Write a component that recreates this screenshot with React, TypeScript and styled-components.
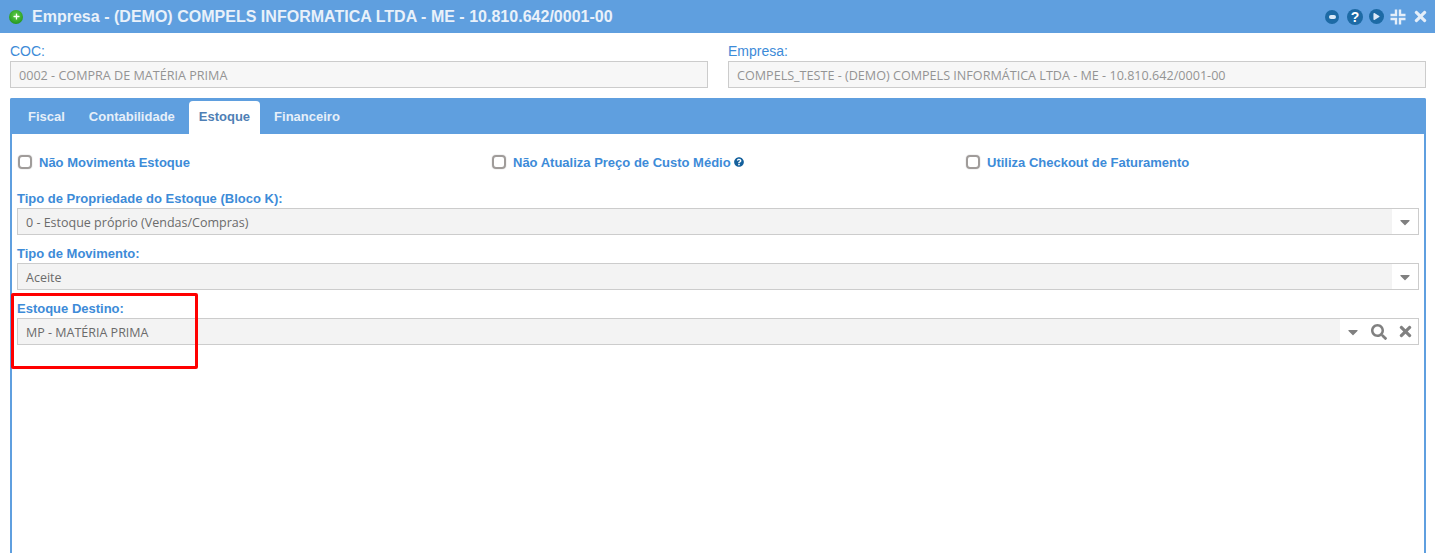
import React from 'react';
import styled, { createGlobalStyle } from 'styled-components';
import { FaQuestionCircle, FaSearch, FaTimes, FaCaretDown, FaPlay, FaPlus } from 'react-icons/fa';

const BLUE = '#5f9fdf';
const LABEL = '#3d8bd8';

const GlobalStyle = createGlobalStyle`
  html, body {
    margin: 0;
    height: 553px;
    overflow: hidden;
    background: #fff;
    font-family: "Liberation Sans", Arial, sans-serif;
  }
`;

function CheckField({ label, help }: { label: string; help?: boolean }) {
  return (
    <CheckItem>
      <CheckBox />
      <CheckLabel>{label}</CheckLabel>
      {help && <HelpIcon><FaQuestionCircle size={10} /></HelpIcon>}
    </CheckItem>
  );
}

function SelectField({ label, value, lookup }: { label: string; value: string; lookup?: boolean }) {
  return (
    <Field>
      <FieldLabel>{label}</FieldLabel>
      <SelectBox>
        <SelectValue>{value}</SelectValue>
        <SelectActions>
          <FaCaretDown size={16} />
          {lookup && <FaSearch size={16} />}
          {lookup && <FaTimes size={17} />}
        </SelectActions>
      </SelectBox>
    </Field>
  );
}

export default function App() {
  return (
    <Page>
      <GlobalStyle />
      <TitleBar>
        <TitleLeft>
          <GreenBall><FaPlus size={7} color="#fff" /></GreenBall>
          <Title>Empresa - (DEMO) COMPELS INFORMATICA LTDA - ME - 10.810.642/0001-00</Title>
        </TitleLeft>
        <TitleTools>
          <RoundTool $size={14}><ToolDash /></RoundTool>
          <RoundTool $size={16}><HelpGlyph>?</HelpGlyph></RoundTool>
          <RoundTool $size={15}><FaPlay size={7} color="#dbe9f7" /></RoundTool>
          <svg width="16" height="16" viewBox="0 0 16 16" fill="none" stroke="#e4eef9" strokeWidth="2.4">
            <path d="M6 0.5V6H0.5M10 0.5V6H15.5M6 15.5V10H0.5M10 15.5V10H15.5" />
          </svg>
          <FaTimes size={17} color="#e4eef9" />
        </TitleTools>
      </TitleBar>

      <TopFields>
        <TopField>
          <TopLabel>COC:</TopLabel>
          <ReadOnlyInput>0002 - COMPRA DE MATÉRIA PRIMA</ReadOnlyInput>
        </TopField>
        <TopField>
          <TopLabel>Empresa:</TopLabel>
          <ReadOnlyInput>COMPELS_TESTE - (DEMO) COMPELS INFORMÁTICA LTDA - ME - 10.810.642/0001-00</ReadOnlyInput>
        </TopField>
      </TopFields>

      <TabPanel>
        <TabBar>
          {['Fiscal', 'Contabilidade', 'Estoque', 'Financeiro'].map((tab) => (
            <Tab key={tab} $active={tab === 'Estoque'}>{tab}</Tab>
          ))}
        </TabBar>
        <TabBody>
          <CheckRow>
            <CheckField label="Não Movimenta Estoque" />
            <CheckField label="Não Atualiza Preço de Custo Médio" help />
            <CheckField label="Utiliza Checkout de Faturamento" />
          </CheckRow>
          <SelectField label="Tipo de Propriedade do Estoque (Bloco K):" value="0 - Estoque próprio (Vendas/Compras)" />
          <SelectField label="Tipo de Movimento:" value="Aceite" />
          <SelectField label="Estoque Destino:" value="MP - MATÉRIA PRIMA" lookup />
          <Highlight />
        </TabBody>
      </TabPanel>
    </Page>
  );
}

const Page = styled.div`
  height: 553px;
  display: flex;
  flex-direction: column;
  overflow: hidden;
`;

const TitleBar = styled.div`
  height: 33px;
  flex: none;
  background: ${BLUE};
  display: flex;
  align-items: center;
  justify-content: space-between;
  padding: 0 6px 0 9px;
`;

const TitleLeft = styled.div`
  display: flex;
  align-items: center;
  gap: 9px;
`;

const GreenBall = styled.span`
  width: 14px;
  height: 14px;
  border-radius: 50%;
  background: radial-gradient(circle at 50% 40%, #62d24c, #118411);
  display: flex;
  align-items: center;
  justify-content: center;
`;

const Title = styled.div`
  color: #e9f1fa;
  font-size: 16px;
  font-weight: bold;
  letter-spacing: 0.015px;
`;

const TitleTools = styled.div`
  display: flex;
  align-items: center;
  gap: 6px;
`;

const RoundTool = styled.span<{ $size: number }>`
  width: ${({ $size }) => $size}px;
  height: ${({ $size }) => $size}px;
  border-radius: 50%;
  background: #1d6aa5;
  display: flex;
  align-items: center;
  justify-content: center;

  &:first-child {
    margin-right: 2px;
  }
`;

const ToolDash = styled.span`
  width: 7px;
  height: 4px;
  border-radius: 2px;
  background: #dbe9f7;
`;

const HelpGlyph = styled.span`
  color: #fff;
  font-size: 14px;
  font-weight: bold;
  line-height: 16px;
`;

const TopFields = styled.div`
  display: grid;
  grid-template-columns: 698px 698px;
  column-gap: 20px;
  padding: 10px 0 0 10px;
`;

const TopField = styled.div`
  display: flex;
  flex-direction: column;
`;

const TopLabel = styled.label`
  color: ${LABEL};
  font-size: 14px;
  line-height: 16px;
  margin-bottom: 2px;
`;

const ReadOnlyInput = styled.div`
  height: 27px;
  box-sizing: border-box;
  border: 1px solid #ccc;
  background: #f7f7f7;
  color: #949494;
  font-family: "Open Sans", sans-serif;
  font-size: 12.6px;
  line-height: 25px;
  padding: 1px 0 0 8px;
`;

const TabPanel = styled.div`
  flex: 1;
  width: 1416px;
  margin: 10px 0 0 10px;
  box-sizing: border-box;
  border: 2px solid ${BLUE};
  border-bottom: none;
  border-radius: 2px 2px 0 0;
  display: flex;
  flex-direction: column;
`;

const TabBar = styled.div`
  height: 34px;
  flex: none;
  background: ${BLUE};
  display: flex;
  align-items: flex-end;
  padding-left: 6px;
  gap: 4px;
`;

const Tab = styled.div<{ $active?: boolean }>`
  height: 33px;
  box-sizing: border-box;
  padding: 0 10px 2px;
  display: flex;
  align-items: center;
  font-size: 13px;
  font-weight: bold;
  border-radius: 4px 4px 0 0;
  background: ${({ $active }) => ($active ? '#fff' : 'transparent')};
  color: ${({ $active }) => ($active ? '#4f7fb5' : '#e6eff9')};
`;

const TabBody = styled.div`
  position: relative;
  flex: 1;
  padding: 18px 5px 0 5px;
`;

const CheckRow = styled.div`
  display: grid;
  grid-template-columns: repeat(3, 474px);
  height: 28px;
  margin-bottom: 10px;
`;

const CheckItem = styled.div`
  display: flex;
  align-items: center;
  height: 20px;
  padding-left: 1px;
`;

const CheckBox = styled.span`
  width: 14px;
  height: 14px;
  box-sizing: border-box;
  border: 2px solid #a09c9a;
  border-radius: 4px;
  background: #fff;
  box-shadow: 0 0 0 1px #f4f4f4;
  margin-right: 7px;
`;

const CheckLabel = styled.span`
  color: ${LABEL};
  font-size: 13px;
  font-weight: bold;
`;

const HelpIcon = styled.span`
  color: #14609c;
  display: flex;
  margin-left: 3px;
`;

const Field = styled.div`
  display: flex;
  flex-direction: column;
  margin-bottom: 10px;
`;

const FieldLabel = styled.label`
  color: ${LABEL};
  font-size: 13px;
  font-weight: bold;
  line-height: 18px;
`;

const SelectBox = styled.div`
  height: 27px;
  box-sizing: border-box;
  border: 1px solid #ccc;
  display: flex;
  align-items: stretch;
`;

const SelectValue = styled.div`
  flex: 1;
  background: #f3f3f3;
  color: #6b6b6b;
  font-family: "Open Sans", sans-serif;
  font-size: 12.5px;
  line-height: 25px;
  padding: 1px 0 0 8px;
`;

const SelectActions = styled.div`
  display: grid;
  grid-auto-flow: column;
  grid-auto-columns: 26px;
  justify-items: center;
  align-items: center;
  color: #808080;
`;

const Highlight = styled.div`
  position: absolute;
  left: -1px;
  top: 159px;
  width: 187px;
  height: 76px;
  box-sizing: border-box;
  border: 3px solid #f00;
  border-radius: 2px;
  pointer-events: none;
`;
